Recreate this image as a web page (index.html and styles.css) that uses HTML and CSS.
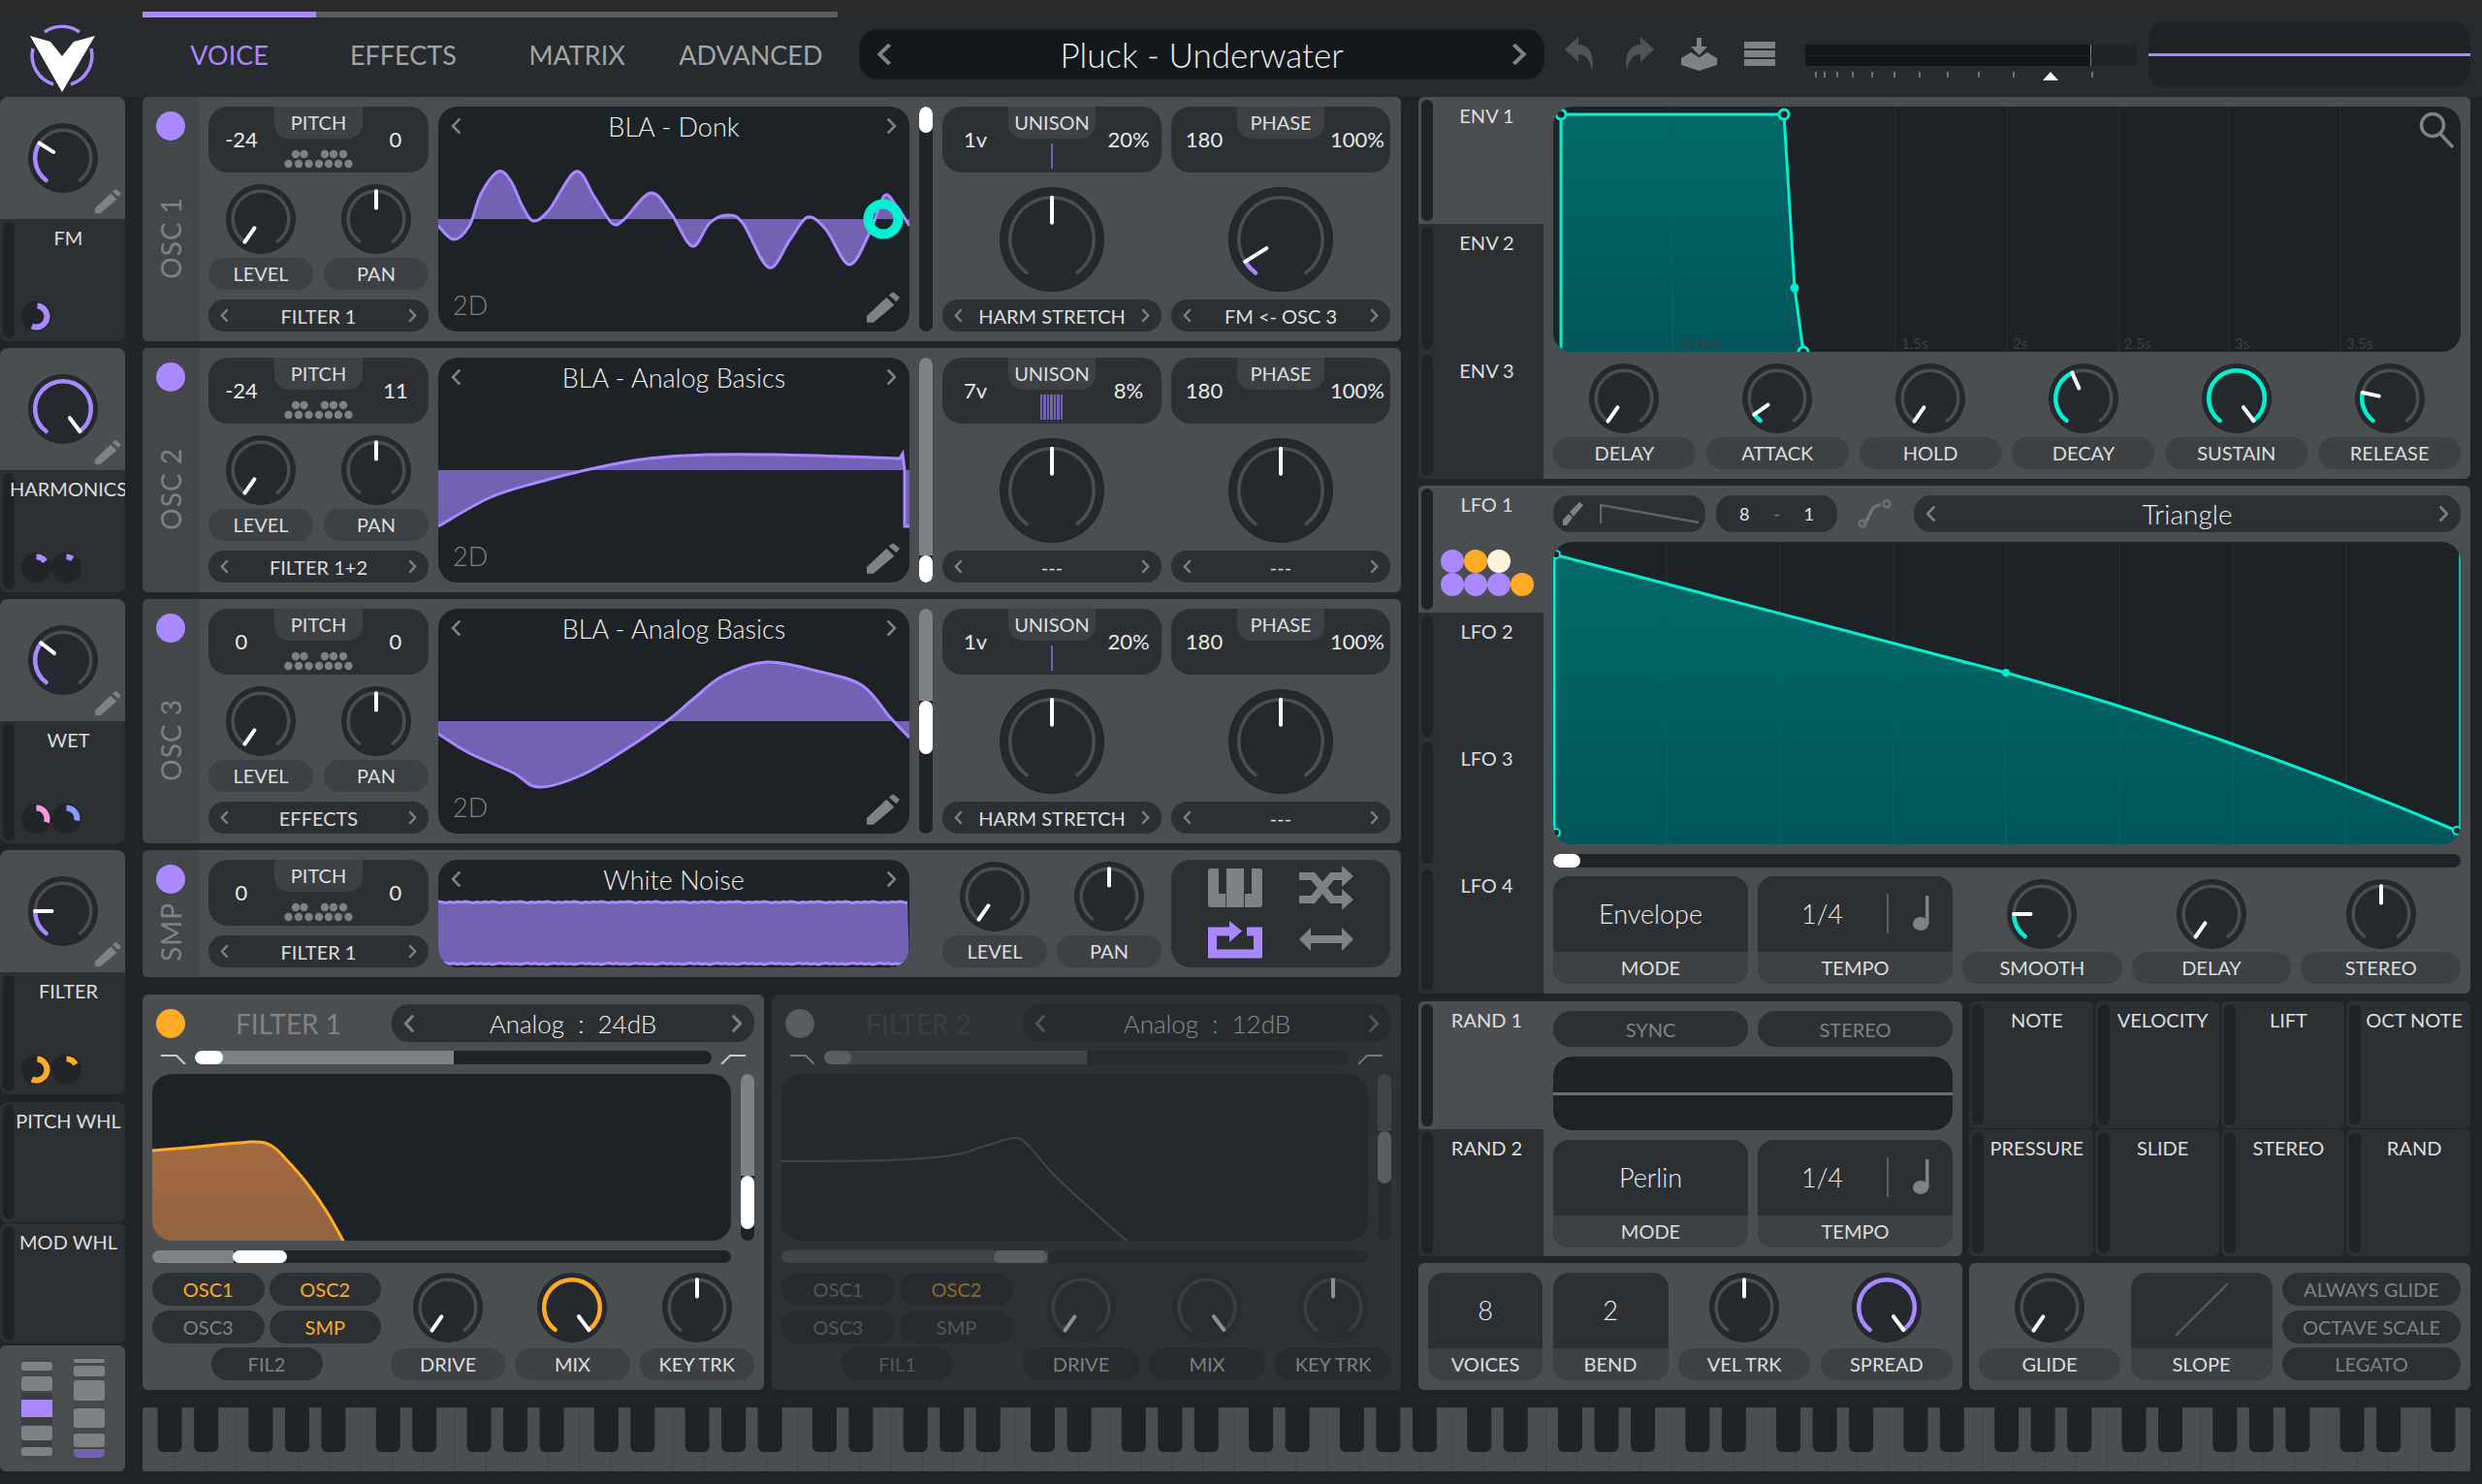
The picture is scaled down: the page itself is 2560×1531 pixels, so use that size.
FILE: index.html
```html
<!DOCTYPE html>
<html lang="en">
<head>
    <meta charset="UTF-8">
    <title>Vital</title>
    <link rel="stylesheet" href="styles.css">
</head>
<body>
    <svg class="defs" width="0" height="0">
        <symbol id="chev-l" viewBox="0 0 10 18" preserveAspectRatio="none"><path d="M8.5 1.5 L2 9 L8.5 16.5" fill="none" stroke="currentColor" stroke-width="2.6"/></symbol>
        <symbol id="chev-r" viewBox="0 0 10 18" preserveAspectRatio="none"><path d="M1.5 1.5 L8 9 L1.5 16.5" fill="none" stroke="currentColor" stroke-width="2.6"/></symbol>
        <symbol id="pencil" viewBox="0 0 30 28"><path d="M0 28 V22 L18 5 L25 12 L6 28 Z M20 3 L24 0 L30 5 L27 9 Z" fill="currentColor"/></symbol>
        <symbol id="dots" viewBox="0 0 72 20"><g fill="currentColor"><circle cx="12" cy="5" r="4.2"/><circle cx="20.5" cy="5" r="4.2"/><circle cx="42" cy="5" r="4.2"/><circle cx="51" cy="5" r="4.2"/><circle cx="61" cy="5" r="4.2"/><circle cx="4.5" cy="15" r="4.2"/><circle cx="15" cy="15" r="4.2"/><circle cx="25.5" cy="15" r="4.2"/><circle cx="36" cy="15" r="4.2"/><circle cx="46" cy="15" r="4.2"/><circle cx="56" cy="15" r="4.2"/><circle cx="66.5" cy="15" r="4.2"/></g></symbol>
        <symbol id="note" viewBox="0 0 18 36"><ellipse cx="8" cy="29" rx="8" ry="7" fill="currentColor"/><rect x="13" y="0" width="3.5" height="30" fill="currentColor"/></symbol>
    </svg>

    <div class="app">
        <div class="topstrip"></div>

        <header class="header">
            <div class="logo">
                <svg width="100" height="88" viewBox="0 0 100 88">
                    <path d="M46 21 A31 31 0 0 1 82 21" fill="none" stroke="#aa88ff" stroke-width="3.5"/>
                    <path d="M34 38 A31 31 0 0 0 55 75" fill="none" stroke="#aa88ff" stroke-width="3.5"/>
                    <path d="M94 38 A31 31 0 0 1 73 75" fill="none" stroke="#aa88ff" stroke-width="3.5"/>
                    <path d="M31 25 L52 31 L64 46 L76 31 L98 25 L64 83 Z" fill="#ffffff"/>
                </svg>
            </div>
            <div class="tabs-wrap">
                <div class="tab-progress"><i></i></div>
                <nav class="main-tabs">
                    <span class="on">VOICE</span>
                    <span>EFFECTS</span>
                    <span>MATRIX</span>
                    <span>ADVANCED</span>
                </nav>
            </div>
            <div class="preset">
                <svg class="chev"><use href="#chev-l"/></svg>
                <span>Pluck - Underwater</span>
                <svg class="chev"><use href="#chev-r"/></svg>
            </div>
            <div class="tools">
                <svg width="30" height="36" viewBox="0 0 30 36"><path d="M0 13 L14 0 V8 C26 8 31 20 28 35 C26 24 22 18 14 18 V26 Z" fill="#4f5356"/></svg>
                <svg width="30" height="36" viewBox="0 0 30 36"><path d="M30 13 L16 0 V8 C4 8 -1 20 2 35 C4 24 8 18 16 18 V26 Z" fill="#4f5356"/></svg>
                <svg width="37" height="34" viewBox="0 0 37 34"><path d="M16 0 H21 V9 H27 L18.5 18 L10 9 H16 Z M0 21 L10 15 L18.5 20.5 L27 15 L37 21 V28 L18.5 34 L0 28 Z" fill="#7f8284"/></svg>
                <svg width="32" height="26" viewBox="0 0 32 26"><path d="M0 0 H32 V7 H0 Z M0 9 H32 V16 H0 Z M0 18 H32 V25 H0 Z" fill="#7f8284"/></svg>
            </div>
            <div class="volume">
                <div class="vol-bars"><i></i><i></i></div>
                <div class="vol-ticks" id="ticks"></div>
            </div>
            <div class="scope"><i></i></div>
        </header>

        <main class="main">
            <aside class="mods">
                <div class="mod">
                    <div class="mod-top"><div class="knob" data-v="-58" data-c="purple"></div><svg class="pencil"><use href="#pencil"/></svg></div>
                    <div class="tab">
                        <div class="tab-name mod-name"><span>FM</span><div class="meters"><div class="meter" data-a="5" data-b="205" data-c="purple"></div></div></div>
                    </div>
                </div>
                <div class="mod">
                    <div class="mod-top"><div class="knob" data-v="143" data-c="purple"></div><svg class="pencil"><use href="#pencil"/></svg></div>
                    <div class="tab">
                        <div class="tab-name mod-name"><span>HARMONICS</span><div class="meters"><div class="meter" data-a="0" data-b="55" data-c="purple"></div><div class="meter" data-a="0" data-b="35" data-c="purple"></div></div></div>
                    </div>
                </div>
                <div class="mod">
                    <div class="mod-top"><div class="knob" data-v="-52" data-c="purple"></div><svg class="pencil"><use href="#pencil"/></svg></div>
                    <div class="tab">
                        <div class="tab-name mod-name"><span>WET</span><div class="meters"><div class="meter" data-a="0" data-b="110" data-c="pink"></div><div class="meter" data-a="0" data-b="100" data-c="blue"></div></div></div>
                    </div>
                </div>
                <div class="mod">
                    <div class="mod-top"><div class="knob" data-v="-90" data-c="purple"></div><svg class="pencil"><use href="#pencil"/></svg></div>
                    <div class="tab">
                        <div class="tab-name mod-name"><span>FILTER</span><div class="meters"><div class="meter" data-a="5" data-b="205" data-c="orange"></div><div class="meter" data-a="0" data-b="60" data-c="orange"></div></div></div>
                    </div>
                </div>
                <div class="wheel-mods">
                    <div class="tab"><div class="tab-name">PITCH WHL</div></div>
                    <div class="tab"><div class="tab-name">MOD WHL</div></div>
                </div>
                <div class="wheels">
                    <svg width="32" height="108" viewBox="0 0 32 108">
                        <rect width="32" height="108" rx="8" fill="#45494c"/>
                        <g fill="#3a3e41"><rect y="38" width="32" height="33"/><rect y="86" width="32" height="9"/></g>
                        <g fill="#7f8284"><rect y="6" width="32" height="9" rx="3"/><rect y="21" width="32" height="15" rx="3"/><rect y="72" width="32" height="15" rx="3"/><rect y="94" width="32" height="9" rx="3"/></g>
                        <rect y="45" width="32" height="18" fill="#aa88ff"/>
                    </svg>
                    <svg width="32" height="108" viewBox="0 0 32 108">
                        <rect width="32" height="108" rx="8" fill="#45494c"/>
                        <g fill="#7f8284"><rect y="3" width="32" height="4" rx="2"/><rect y="10" width="32" height="11" rx="3"/><rect y="25" width="32" height="21" rx="3"/><rect y="54" width="32" height="20" rx="3"/><rect y="80" width="32" height="14" rx="3"/></g>
                        <path d="M0 96 H32 V99 Q32 105 26 105 H6 Q0 105 0 99 Z" fill="#7361b3"/>
                    </svg>
                </div>
            </aside>

            <div class="center">
                <section class="panel osc">
                    <div class="strip"><span class="led"></span><span class="vlabel">OSC 1</span></div>
                    <div class="osc-left">
                        <div class="readout">
                            <span class="val">-24</span>
                            <div class="readout-mid"><span class="tab-label">PITCH</span><svg class="dots"><use href="#dots"/></svg></div>
                            <span class="val">0</span>
                        </div>
                        <div class="pair">
                            <div class="kn"><div class="knob" data-v="-145"></div><div class="lbl">LEVEL</div></div>
                            <div class="kn"><div class="knob" data-v="0"></div><div class="lbl">PAN</div></div>
                        </div>
                        <div class="sel"><svg class="chev"><use href="#chev-l"/></svg><span>FILTER 1</span><svg class="chev"><use href="#chev-r"/></svg></div>
                    </div>
                    <div class="wave">
                        <svg class="wave-svg" data-wave="donk" width="486" height="232" viewBox="0 0 486 232"></svg>
                        <div class="wave-title"><svg class="chev"><use href="#chev-l"/></svg><span>BLA - Donk</span><svg class="chev"><use href="#chev-r"/></svg></div>
                        <div class="wave-foot"><span>2D</span><svg class="pencil-lg"><use href="#pencil"/></svg></div>
                    </div>
                    <div class="vscroll"><i class="fill" style="height:0"></i><i class="thumb" style="top:0;height:27px"></i></div>
                    <div class="osc-col">
                        <div class="readout">
                            <span class="val">1v</span>
                            <div class="readout-mid"><span class="tab-label">UNISON</span><i class="voices one"></i></div>
                            <span class="val">20%</span>
                        </div>
                        <div class="knob big" data-v="0"></div>
                        <div class="sel"><svg class="chev"><use href="#chev-l"/></svg><span>HARM STRETCH</span><svg class="chev"><use href="#chev-r"/></svg></div>
                    </div>
                    <div class="osc-col">
                        <div class="readout">
                            <span class="val">180</span>
                            <div class="readout-mid"><span class="tab-label">PHASE</span></div>
                            <span class="val">100%</span>
                        </div>
                        <div class="knob big" data-v="-122" data-c="purple"></div>
                        <div class="sel"><svg class="chev"><use href="#chev-l"/></svg><span>FM &lt;- OSC 3</span><svg class="chev"><use href="#chev-r"/></svg></div>
                    </div>
                </section>

                <section class="panel osc">
                    <div class="strip"><span class="led"></span><span class="vlabel">OSC 2</span></div>
                    <div class="osc-left">
                        <div class="readout">
                            <span class="val">-24</span>
                            <div class="readout-mid"><span class="tab-label">PITCH</span><svg class="dots"><use href="#dots"/></svg></div>
                            <span class="val">11</span>
                        </div>
                        <div class="pair">
                            <div class="kn"><div class="knob" data-v="-145"></div><div class="lbl">LEVEL</div></div>
                            <div class="kn"><div class="knob" data-v="0"></div><div class="lbl">PAN</div></div>
                        </div>
                        <div class="sel"><svg class="chev"><use href="#chev-l"/></svg><span>FILTER 1+2</span><svg class="chev"><use href="#chev-r"/></svg></div>
                    </div>
                    <div class="wave">
                        <svg class="wave-svg" data-wave="basic" width="486" height="232" viewBox="0 0 486 232"></svg>
                        <div class="wave-title"><svg class="chev"><use href="#chev-l"/></svg><span>BLA - Analog Basics</span><svg class="chev"><use href="#chev-r"/></svg></div>
                        <div class="wave-foot"><span>2D</span><svg class="pencil-lg"><use href="#pencil"/></svg></div>
                    </div>
                    <div class="vscroll"><i class="fill" style="height:204px"></i><i class="thumb" style="top:204px;height:28px"></i></div>
                    <div class="osc-col">
                        <div class="readout">
                            <span class="val">7v</span>
                            <div class="readout-mid"><span class="tab-label">UNISON</span><i class="voices many"></i></div>
                            <span class="val">8%</span>
                        </div>
                        <div class="knob big" data-v="0"></div>
                        <div class="sel"><svg class="chev"><use href="#chev-l"/></svg><span>---</span><svg class="chev"><use href="#chev-r"/></svg></div>
                    </div>
                    <div class="osc-col">
                        <div class="readout">
                            <span class="val">180</span>
                            <div class="readout-mid"><span class="tab-label">PHASE</span></div>
                            <span class="val">100%</span>
                        </div>
                        <div class="knob big" data-v="0"></div>
                        <div class="sel"><svg class="chev"><use href="#chev-l"/></svg><span>---</span><svg class="chev"><use href="#chev-r"/></svg></div>
                    </div>
                </section>

                <section class="panel osc">
                    <div class="strip"><span class="led"></span><span class="vlabel">OSC 3</span></div>
                    <div class="osc-left">
                        <div class="readout">
                            <span class="val">0</span>
                            <div class="readout-mid"><span class="tab-label">PITCH</span><svg class="dots"><use href="#dots"/></svg></div>
                            <span class="val">0</span>
                        </div>
                        <div class="pair">
                            <div class="kn"><div class="knob" data-v="-145"></div><div class="lbl">LEVEL</div></div>
                            <div class="kn"><div class="knob" data-v="0"></div><div class="lbl">PAN</div></div>
                        </div>
                        <div class="sel"><svg class="chev"><use href="#chev-l"/></svg><span>EFFECTS</span><svg class="chev"><use href="#chev-r"/></svg></div>
                    </div>
                    <div class="wave">
                        <svg class="wave-svg" data-wave="basic3" width="486" height="232" viewBox="0 0 486 232"></svg>
                        <div class="wave-title"><svg class="chev"><use href="#chev-l"/></svg><span>BLA - Analog Basics</span><svg class="chev"><use href="#chev-r"/></svg></div>
                        <div class="wave-foot"><span>2D</span><svg class="pencil-lg"><use href="#pencil"/></svg></div>
                    </div>
                    <div class="vscroll"><i class="fill" style="height:95px"></i><i class="thumb" style="top:95px;height:55px"></i></div>
                    <div class="osc-col">
                        <div class="readout">
                            <span class="val">1v</span>
                            <div class="readout-mid"><span class="tab-label">UNISON</span><i class="voices one"></i></div>
                            <span class="val">20%</span>
                        </div>
                        <div class="knob big" data-v="0"></div>
                        <div class="sel"><svg class="chev"><use href="#chev-l"/></svg><span>HARM STRETCH</span><svg class="chev"><use href="#chev-r"/></svg></div>
                    </div>
                    <div class="osc-col">
                        <div class="readout">
                            <span class="val">180</span>
                            <div class="readout-mid"><span class="tab-label">PHASE</span></div>
                            <span class="val">100%</span>
                        </div>
                        <div class="knob big" data-v="0"></div>
                        <div class="sel"><svg class="chev"><use href="#chev-l"/></svg><span>---</span><svg class="chev"><use href="#chev-r"/></svg></div>
                    </div>
                </section>

                <section class="panel osc smp">
                    <div class="strip"><span class="led"></span><span class="vlabel">SMP</span></div>
                    <div class="osc-left">
                        <div class="readout">
                            <span class="val">0</span>
                            <div class="readout-mid"><span class="tab-label">PITCH</span><svg class="dots"><use href="#dots"/></svg></div>
                            <span class="val">0</span>
                        </div>
                        <div class="sel"><svg class="chev"><use href="#chev-l"/></svg><span>FILTER 1</span><svg class="chev"><use href="#chev-r"/></svg></div>
                    </div>
                    <div class="wave wave-smp">
                        <svg class="wave-svg" data-wave="noise" width="486" height="111" viewBox="0 0 486 111"></svg>
                        <div class="wave-title"><svg class="chev"><use href="#chev-l"/></svg><span>White Noise</span><svg class="chev"><use href="#chev-r"/></svg></div>
                    </div>
                    <div class="smp-knobs">
                        <div class="kn"><div class="knob" data-v="-145"></div><div class="lbl">LEVEL</div></div>
                        <div class="kn"><div class="knob" data-v="0"></div><div class="lbl">PAN</div></div>
                    </div>
                    <div class="smp-icons">
                        <svg width="56" height="40" viewBox="0 0 56 40">
                            <rect width="56" height="40" rx="3" fill="#7f8284"/>
                            <path d="M11 0 H19 V26 H18.8 V40 H18 V26 H11 Z M37 0 H45 V26 H38 V40 H37 Z" fill="#2c3033"/>
                        </svg>
                        <svg width="56" height="46" viewBox="0 0 56 46">
                            <path d="M0 11 H14 L34 35 H46 M0 35 H14 L34 11 H46" fill="none" stroke="#7f8284" stroke-width="8"/>
                            <path d="M44 0 L56 11 L44 22 Z M44 24 L56 35 L44 46 Z" fill="#7f8284"/>
                        </svg>
                        <svg width="56" height="39" viewBox="0 0 56 39">
                            <path d="M24 11 H4.5 V34 H51.5 V11 H40" fill="none" stroke="#aa88ff" stroke-width="9"/>
                            <path d="M22 0 L35 10.5 L22 22 Z" fill="#aa88ff"/>
                        </svg>
                        <svg width="56" height="24" viewBox="0 0 56 24">
                            <path d="M8 12 H48" stroke="#7f8284" stroke-width="8"/>
                            <path d="M12 0 L0 12 L12 24 Z M44 0 L56 12 L44 24 Z" fill="#7f8284"/>
                        </svg>
                    </div>
                </section>

                <div class="filters">
                    <section class="panel filter">
                        <div class="fil-head"><span class="led orange"></span><span class="fil-name">FILTER 1</span>
                            <div class="preset-sel"><svg class="chev"><use href="#chev-l"/></svg><span>Analog&nbsp; : &nbsp;24dB</span><svg class="chev"><use href="#chev-r"/></svg></div>
                        </div>
                        <div class="fil-morph">
                            <svg width="26" height="14" viewBox="0 0 26 14"><path d="M0 5 H16 L25 14" fill="none" stroke="#c9cacb" stroke-width="2"/></svg>
                            <div class="slider"><i class="fill" style="width:50%"></i><i class="thumb" style="left:0;width:29px"></i></div>
                            <svg width="26" height="14" viewBox="0 0 26 14"><path d="M1 14 L10 5 H26" fill="none" stroke="#c9cacb" stroke-width="2"/></svg>
                        </div>
                        <div class="fil-graph">
                            <div class="graph"><svg class="wave-svg" data-curve="f1" width="597" height="172" viewBox="0 0 597 172"></svg></div>
                            <div class="vscroll"><i class="fill" style="height:105px"></i><i class="thumb" style="top:105px;height:55px"></i></div>
                        </div>
                        <div class="slider fil-cut"><i class="fill" style="width:84px"></i><i class="thumb" style="left:83px;width:56px"></i></div>
                        <div class="fil-bottom">
                            <div class="routes">
                                <div class="btn on">OSC1</div><div class="btn on">OSC2</div>
                                <div class="btn">OSC3</div><div class="btn on">SMP</div>
                                <div class="btn fil-link">FIL2</div>
                            </div>
                            <div class="fil-knobs">
                                <div class="kn"><div class="knob" data-v="-145"></div><div class="lbl">DRIVE</div></div>
                                <div class="kn"><div class="knob" data-v="143" data-c="orange"></div><div class="lbl">MIX</div></div>
                                <div class="kn"><div class="knob" data-v="0"></div><div class="lbl">KEY TRK</div></div>
                            </div>
                        </div>
                    </section>

                    <section class="panel filter off">
                        <div class="fil-head"><span class="led"></span><span class="fil-name">FILTER 2</span>
                            <div class="preset-sel"><svg class="chev"><use href="#chev-l"/></svg><span>Analog&nbsp; : &nbsp;12dB</span><svg class="chev"><use href="#chev-r"/></svg></div>
                        </div>
                        <div class="fil-morph">
                            <svg width="26" height="14" viewBox="0 0 26 14"><path d="M0 5 H16 L25 14" fill="none" stroke="#c9cacb" stroke-width="2"/></svg>
                            <div class="slider"><i class="fill" style="width:50%"></i><i class="thumb" style="left:0;width:28px"></i></div>
                            <svg width="26" height="14" viewBox="0 0 26 14"><path d="M1 14 L10 5 H26" fill="none" stroke="#c9cacb" stroke-width="2"/></svg>
                        </div>
                        <div class="fil-graph">
                            <div class="graph"><svg class="wave-svg" data-curve="f2" width="606" height="172" viewBox="0 0 606 172"></svg></div>
                            <div class="vscroll"><i class="fill" style="height:59px"></i><i class="thumb" style="top:59px;height:54px"></i></div>
                        </div>
                        <div class="slider fil-cut"><i class="fill" style="width:275px"></i><i class="thumb" style="left:219px;width:55px"></i></div>
                        <div class="fil-bottom">
                            <div class="routes">
                                <div class="btn">OSC1</div><div class="btn on">OSC2</div>
                                <div class="btn">OSC3</div><div class="btn">SMP</div>
                                <div class="btn fil-link">FIL1</div>
                            </div>
                            <div class="fil-knobs">
                                <div class="kn"><div class="knob" data-v="-145"></div><div class="lbl">DRIVE</div></div>
                                <div class="kn"><div class="knob" data-v="143"></div><div class="lbl">MIX</div></div>
                                <div class="kn"><div class="knob" data-v="0"></div><div class="lbl">KEY TRK</div></div>
                            </div>
                        </div>
                    </section>
                </div>
            </div>

            <div class="right">
                <section class="panel sec env">
                    <div class="sec-tabs">
                        <div class="tab on"><div class="tab-name">ENV 1</div></div>
                        <div class="tab"><div class="tab-name">ENV 2</div></div>
                        <div class="tab"><div class="tab-name">ENV 3</div></div>
                    </div>
                    <div class="sec-body">
                        <div class="graph env-graph">
                            <svg width="936" height="253" viewBox="0 0 936 253">
                                <defs>
                                    <linearGradient id="teal-fill" x1="0" y1="0" x2="0" y2="1"><stop offset="0" stop-color="#006a68"/><stop offset="1" stop-color="#00565a"/></linearGradient>
                                </defs>
                                <g stroke="#282c2f" stroke-width="1.5"><path d="M123 0 V253 M238 0 V253 M353 0 V253 M468 0 V253 M583 0 V253 M697 0 V253 M812 0 V253"/></g>
                                <path d="M8 8 H238 L249 187 L258 253 H8 Z" fill="url(#teal-fill)"/>
                                <path d="M123 8 V253" stroke="#046462" stroke-width="1.5"/>
                                <g class="grid-text">
                                    <text x="129" y="250">500ms</text><text x="244" y="250">1</text><text x="359" y="250">1.5s</text><text x="474" y="250">2s</text><text x="589" y="250">2.5s</text><text x="703" y="250">3s</text><text x="818" y="250">3.5s</text>
                                </g>
                                <path d="M8 253 V8 H238 L249 187 L258 253" fill="none" stroke="#00f0d2" stroke-width="3"/>
                                <g fill="#1d2226" stroke="#00f0d2" stroke-width="3"><circle cx="8" cy="8" r="5"/><circle cx="238" cy="8" r="5"/><circle cx="258" cy="253" r="5"/></g>
                                <circle cx="249" cy="187" r="4.5" fill="#00f0d2"/>
                                <circle cx="907" cy="19" r="11.5" fill="none" stroke="#7f8284" stroke-width="3.5"/>
                                <path d="M915 28 L928 42" stroke="#7f8284" stroke-width="3.5"/>
                            </svg>
                        </div>
                        <div class="env-knobs">
                            <div class="kn"><div class="knob" data-v="-145"></div><div class="lbl">DELAY</div></div>
                            <div class="kn"><div class="knob" data-v="-125" data-c="teal"></div><div class="lbl">ATTACK</div></div>
                            <div class="kn"><div class="knob" data-v="-145"></div><div class="lbl">HOLD</div></div>
                            <div class="kn"><div class="knob" data-v="-24" data-c="teal"></div><div class="lbl">DECAY</div></div>
                            <div class="kn"><div class="knob" data-v="143" data-c="teal"></div><div class="lbl">SUSTAIN</div></div>
                            <div class="kn"><div class="knob" data-v="-78" data-c="teal"></div><div class="lbl">RELEASE</div></div>
                        </div>
                    </div>
                </section>

                <section class="panel sec lfo">
                    <div class="sec-tabs">
                        <div class="tab on"><div class="tab-name">LFO 1
                            <div class="lfo-dots"><i class="p"></i><i class="o"></i><i class="c"></i><i class="gap"></i><i class="p"></i><i class="p"></i><i class="p"></i><i class="o"></i></div>
                        </div></div>
                        <div class="tab"><div class="tab-name">LFO 2</div></div>
                        <div class="tab"><div class="tab-name">LFO 3</div></div>
                        <div class="tab"><div class="tab-name">LFO 4</div></div>
                    </div>
                    <div class="sec-body">
                        <div class="lfo-top">
                            <div class="lfo-shape">
                                <svg width="22" height="24" viewBox="0 0 22 24"><path d="M1 24 V18 L7 12 L11 16 L5 24 Z M8 10 L18 0 L22 3 L12 15 Z" fill="#7f8284"/></svg>
                                <svg width="102" height="20" viewBox="0 0 102 20"><path d="M1 20 V1 L102 19" fill="none" stroke="#5f6365" stroke-width="2.5"/></svg>
                            </div>
                            <div class="lfo-grid"><span>8</span><em>-</em><span>1</span></div>
                            <svg class="lfo-smooth" width="38" height="30" viewBox="0 0 38 30"><path d="M5 24 C14 24 10 6 24 6" fill="none" stroke="#6f7274" stroke-width="3.5"/><circle cx="5" cy="25" r="3.5" fill="none" stroke="#6f7274" stroke-width="2.5"/><circle cx="30" cy="5" r="3.5" fill="none" stroke="#6f7274" stroke-width="2.5"/></svg>
                            <div class="sel lfo-sel"><svg class="chev"><use href="#chev-l"/></svg><span>Triangle</span><svg class="chev"><use href="#chev-r"/></svg></div>
                        </div>
                        <div class="graph lfo-graph">
                            <svg width="936" height="312" viewBox="0 0 936 312">
                                <g stroke="#282c2f" stroke-width="1.5"><path d="M117 0 V312 M234 0 V312 M351 0 V312 M467 0 V312 M584 0 V312 M701 0 V312 M818 0 V312"/></g>
                                <path d="M2 13 L467 135 Q695 198 932 298 V312 H2 Z" fill="url(#teal-fill)"/>
                                <g stroke="#04625f" stroke-width="1.5"><path d="M117 40 V312 M234 72 V312 M351 104 V312 M467 135 V312 M584 170 V312 M701 205 V312 M818 250 V312"/></g>
                                <path d="M1 300 V13 L467 135 Q695 198 932 298" fill="none" stroke="#00f0d2" stroke-width="3"/>
                                <path d="M935 10 V300" stroke="#00f0d2" stroke-width="1.5"/>
                                <g fill="#1d2226" stroke="#00f0d2" stroke-width="2"><circle cx="3" cy="13" r="4"/><circle cx="3" cy="300" r="4"/><circle cx="932" cy="298" r="4"/></g>
                                <circle cx="467" cy="135" r="4" fill="#00f0d2"/>
                            </svg>
                        </div>
                        <div class="slider lfo-pos"><i class="thumb" style="left:0;width:28px"></i></div>
                        <div class="lfo-bottom">
                            <div class="valbox"><div class="valbox-top">Envelope</div><div class="valbox-lbl">MODE</div></div>
                            <div class="valbox"><div class="valbox-top tempo"><span>1/4</span><i></i><svg width="18" height="36"><use href="#note"/></svg></div><div class="valbox-lbl">TEMPO</div></div>
                            <div class="kn"><div class="knob" data-v="-90" data-c="teal"></div><div class="lbl">SMOOTH</div></div>
                            <div class="kn"><div class="knob" data-v="-145"></div><div class="lbl">DELAY</div></div>
                            <div class="kn"><div class="knob" data-v="0"></div><div class="lbl">STEREO</div></div>
                        </div>
                    </div>
                </section>

                <div class="right-row rand-row">
                    <section class="panel sec rand">
                        <div class="sec-tabs">
                            <div class="tab on"><div class="tab-name">RAND 1</div></div>
                            <div class="tab"><div class="tab-name">RAND 2</div></div>
                        </div>
                        <div class="sec-body rand-body">
                            <div class="btn tall">SYNC</div>
                            <div class="btn tall">STEREO</div>
                            <div class="graph rand-graph"><i></i></div>
                            <div class="valbox"><div class="valbox-top">Perlin</div><div class="valbox-lbl">MODE</div></div>
                            <div class="valbox"><div class="valbox-top tempo"><span>1/4</span><i></i><svg width="18" height="36"><use href="#note"/></svg></div><div class="valbox-lbl">TEMPO</div></div>
                        </div>
                    </section>
                    <div class="macros">
                        <div class="tab"><div class="tab-name">NOTE</div></div>
                        <div class="tab"><div class="tab-name">VELOCITY</div></div>
                        <div class="tab"><div class="tab-name">LIFT</div></div>
                        <div class="tab"><div class="tab-name">OCT NOTE</div></div>
                        <div class="tab"><div class="tab-name">PRESSURE</div></div>
                        <div class="tab"><div class="tab-name">SLIDE</div></div>
                        <div class="tab"><div class="tab-name">STEREO</div></div>
                        <div class="tab"><div class="tab-name">RAND</div></div>
                    </div>
                </div>

                <div class="right-row bottom-row">
                    <section class="panel voices-panel">
                        <div class="valbox"><div class="valbox-top">8</div><div class="valbox-lbl">VOICES</div></div>
                        <div class="valbox"><div class="valbox-top">2</div><div class="valbox-lbl">BEND</div></div>
                        <div class="kn"><div class="knob" data-v="0"></div><div class="lbl">VEL TRK</div></div>
                        <div class="kn"><div class="knob" data-v="143" data-c="purple"></div><div class="lbl">SPREAD</div></div>
                    </section>
                    <section class="panel glide-panel">
                        <div class="kn"><div class="knob" data-v="-145"></div><div class="lbl">GLIDE</div></div>
                        <div class="valbox"><div class="valbox-top"><svg width="56" height="56" viewBox="0 0 56 56"><path d="M1 55 L55 1" stroke="#5a5e60" stroke-width="2"/></svg></div><div class="valbox-lbl">SLOPE</div></div>
                        <div class="glide-btns">
                            <div class="btn">ALWAYS GLIDE</div>
                            <div class="btn">OCTAVE SCALE</div>
                            <div class="btn">LEGATO</div>
                        </div>
                    </section>
                </div>
            </div>

            <div class="keyboard" id="keyboard"></div>
        </main>
    </div>
    <script src="script.js"></script>
</body>
</html>
```

FILE: styles.css
```css
* {
    box-sizing: border-box;
}

body {
    margin: 0;
    background: #202427;
    font-family: Lato, "Open Sans", sans-serif;
    color: #e4e5e5;
    overflow: hidden;
}

.defs {
    position: absolute;
}

.app {
    width: 2560px;
    height: 1531px;
    display: flex;
    flex-direction: column;
}

.topstrip {
    height: 12px;
    background: #2a2a2a;
}

.header {
    height: 88px;
    display: flex;
    align-items: center;
    background: #272b2e;
    padding-right: 12px;
}

.logo {
    width: 147px;
    height: 88px;
    flex: none;
}

.logo svg {
    display: block;
}

.tabs-wrap {
    width: 717px;
    height: 88px;
    flex: none;
}

.tab-progress {
    height: 6px;
    background: #5a5e60;
}

.tab-progress i {
    display: block;
    width: 25%;
    height: 6px;
    background: #aa88ff;
}

.main-tabs {
    display: grid;
    grid-template-columns: repeat(4, 1fr);
    height: 76px;
    align-items: center;
    text-align: center;
    font-size: 27px;
    color: #a2a5a6;
}

.main-tabs .on {
    color: #aa88ff;
}

.preset {
    margin-left: 22px;
    width: 707px;
    height: 52px;
    flex: none;
    display: flex;
    align-items: center;
    justify-content: space-between;
    padding: 0 18px;
    background: #14181a;
    border-radius: 20px;
    font-size: 35px;
    font-weight: 300;
    color: #eeeeee;
}

.preset .chev {
    width: 16px;
    height: 24px;
}

.tools {
    margin-left: 5px;
    width: 248px;
    flex: none;
    display: grid;
    grid-template-columns: 62px 62px 61px 63px;
    justify-items: center;
    align-items: center;
}

.volume {
    margin: 20px 0 0 16px;
    width: 342px;
    height: 40px;
    flex: none;
    position: relative;
}

.vol-bars {
    height: 22px;
    display: flex;
    flex-direction: column;
    gap: 1px;
    background: #1f2326;
}

.vol-bars i {
    display: block;
    flex: 1;
    width: 295px;
    background: #13171a;
    border-right: 1.5px solid #7f8284;
}

.vol-ticks {
    position: relative;
    height: 16px;
}

.vol-ticks i {
    position: absolute;
    top: 6px;
    width: 1.5px;
    height: 6px;
    background: #6f7274;
}

.vol-ticks b {
    position: absolute;
    top: 6px;
    width: 0;
    height: 0;
    border-left: 8px solid transparent;
    border-right: 8px solid transparent;
    border-bottom: 9px solid #ffffff;
}

.scope {
    margin-left: 12px;
    width: 332px;
    height: 68px;
    flex: none;
    display: flex;
    align-items: center;
    background: #1f2326;
    border-radius: 18px;
}

.scope i {
    display: block;
    width: 100%;
    height: 3px;
    background: #aa88ff;
}

.main {
    display: grid;
    grid-template-columns: 129px 1298px 1085px;
    grid-template-rows: 1334px 66px;
    column-gap: 18px;
    row-gap: 18px;
}

/* left column */
.mods {
    grid-row: 1 / 3;
    display: flex;
    flex-direction: column;
    gap: 7px;
}

.mod {
    height: 252px;
    display: flex;
    flex-direction: column;
    border-radius: 8px;
    overflow: hidden;
    flex: none;
}

.mod-top {
    height: 126px;
    position: relative;
    display: flex;
    justify-content: center;
    align-items: flex-start;
    padding-top: 27px;
    background: #4a4e51;
}

.pencil {
    position: absolute;
    left: 97px;
    top: 95px;
    width: 29px;
    height: 25px;
    color: #7f8284;
}

.tab {
    display: flex;
    padding: 3px;
    background: #2c3033;
    min-height: 0;
    flex: 1;
    overflow: hidden;
}

.tab::before {
    content: "";
    width: 12px;
    flex: none;
    border-radius: 6px;
    background: #1f2326;
}

.tab.on {
    background: #4a4e51;
}

.tab-name {
    flex: 1;
    min-width: 0;
    line-height: 32px;
    font-size: 20px;
    text-align: center;
    white-space: nowrap;
    color: #dddede;
}

.mod-name {
    display: flex;
    flex-direction: column;
    align-items: center;
}

.meters {
    display: flex;
    align-self: flex-start;
    margin: auto 0 7px 7px;
}

.meter {
    width: 31px;
    height: 31px;
}

.meter svg,
.knob svg {
    display: block;
}

.wheel-mods {
    height: 249px;
    margin-top: 1px;
    flex: none;
    display: flex;
    flex-direction: column;
    gap: 1px;
}

.wheel-mods .tab {
    border-radius: 8px;
}

.wheels {
    height: 130px;
    flex: none;
    margin-top: -5px;
    display: flex;
    justify-content: center;
    gap: 22px;
    padding-top: 11px;
    background: #4a4e51;
    border-radius: 6px;
}

/* center column */
.center {
    display: flex;
    flex-direction: column;
    gap: 7px;
}

.panel {
    background: #4a4e51;
    border-radius: 6px;
}

.osc {
    height: 252px;
    flex: none;
    display: grid;
    grid-template-columns: 58px 227px 486px 14px 226px 226px;
    column-gap: 10px;
    padding-right: 10px;
    overflow: hidden;
}

.osc > * {
    margin: 10px 0;
}

.osc > .strip {
    margin: 0;
}

.strip {
    display: flex;
    flex-direction: column;
    align-items: center;
    padding-top: 15px;
    background: #43474a;
}

.led {
    width: 30px;
    height: 30px;
    flex: none;
    border-radius: 50%;
    background: #aa88ff;
}

.led.orange {
    background: #ffab26;
}

.vlabel {
    margin-top: 58px;
    writing-mode: vertical-rl;
    transform: rotate(180deg);
    font-size: 28px;
    letter-spacing: 1px;
    line-height: 30px;
    color: #7f8284;
}

.osc-left {
    display: flex;
    flex-direction: column;
}

.readout {
    height: 68px;
    flex: none;
    display: grid;
    grid-template-columns: 68px 1fr 68px;
    background: #2c3033;
    border-radius: 20px;
    overflow: hidden;
}

.val {
    font-size: 22px;
    line-height: 68px;
    text-align: center;
    color: #e8e8e8;
}

.readout-mid {
    display: flex;
    flex-direction: column;
    align-items: center;
}

.tab-label {
    width: 100%;
    height: 33px;
    line-height: 33px;
    text-align: center;
    font-size: 20px;
    color: #dddede;
    background: #3d4144;
    border-radius: 0 0 15px 15px;
}

.dots {
    margin-top: 11px;
    width: 72px;
    height: 20px;
    color: #7f8284;
}

.voices {
    display: block;
    margin-top: 5px;
    height: 26px;
}

.voices.one {
    width: 2px;
    background: #7361b3;
}

.voices.many {
    width: 24px;
    background: repeating-linear-gradient(90deg, #7361b3 0 2px, #2c3033 2px 3px, #7361b3 3px 6px, #2c3033 6px 7px);
}

.pair {
    margin-top: 12px;
    display: grid;
    grid-template-columns: 1fr 1fr;
    gap: 11px;
}

.kn {
    display: flex;
    flex-direction: column;
    align-items: center;
}

.knob {
    width: 72px;
    height: 72px;
    flex: none;
}

.knob.big {
    width: 108px;
    height: 108px;
    margin: 15px auto 8px;
}

.lbl {
    margin-top: 4px;
    width: 100%;
    height: 33px;
    line-height: 33px;
    text-align: center;
    font-size: 20px;
    white-space: nowrap;
    color: #dddede;
    background: #3d4144;
    border-radius: 16px;
}

.sel {
    margin-top: 10px;
    height: 33px;
    flex: none;
    display: flex;
    align-items: center;
    justify-content: space-between;
    padding: 0 12px;
    background: #2c3033;
    border-radius: 16px;
    font-size: 20px;
    color: #dddede;
}

.chev {
    width: 9px;
    height: 15px;
    flex: none;
    color: #7f8284;
}

.wave {
    position: relative;
    display: flex;
    flex-direction: column;
    justify-content: space-between;
    background: #1d2226;
    border-radius: 20px;
    overflow: hidden;
}

.wave-svg {
    position: absolute;
    left: 0;
    top: 0;
}

.wave-title {
    position: relative;
    display: flex;
    align-items: center;
    justify-content: space-between;
    height: 40px;
    padding: 0 13px;
    font-size: 27px;
    font-weight: 300;
    color: #eeeeee;
}

.wave-title .chev {
    width: 11px;
    height: 18px;
}

.wave-foot {
    position: relative;
    display: flex;
    align-items: flex-end;
    justify-content: space-between;
    padding: 0 10px 11px 15px;
    font-size: 27px;
    font-weight: 300;
    line-height: 32px;
    color: #7f8284;
}

.pencil-lg {
    width: 34px;
    height: 32px;
    margin-bottom: -2px;
}

.vscroll {
    position: relative;
    background: #1f2326;
    border-radius: 7px;
    overflow: hidden;
}

.vscroll .fill {
    position: absolute;
    left: 0;
    top: 0;
    width: 100%;
    background: #7f8284;
}

.vscroll .thumb {
    position: absolute;
    left: 0;
    width: 100%;
    background: #ffffff;
    border-radius: 7px;
}

.osc-col {
    display: flex;
    flex-direction: column;
}

.osc-col .sel {
    margin-top: 0;
}

/* sample row */
.smp {
    height: 131px;
}

.smp .vlabel {
    margin-top: 9px;
}

.wave-smp {
    justify-content: flex-start;
}

.smp-knobs {
    grid-column: 5;
    display: grid;
    grid-template-columns: 1fr 1fr;
    gap: 10px;
    padding-top: 2px;
}

.smp-icons {
    grid-column: 6;
    display: grid;
    grid-template-columns: 94px 94px;
    grid-template-rows: 53px 53px;
    justify-content: center;
    align-content: center;
    justify-items: center;
    align-items: center;
    background: #2c3033;
    border-radius: 20px;
}

/* filters */
.filters {
    margin-top: 11px;
    display: grid;
    grid-template-columns: 641px 649px;
    gap: 8px;
}

.filter {
    height: 408px;
    padding: 10px;
    display: flex;
    flex-direction: column;
    --sel: 374px;
    --grid: 236px;
}

.fil-head {
    height: 39px;
    flex: none;
    display: flex;
    align-items: center;
}

.fil-head .led {
    margin-left: 4px;
}

.fil-name {
    flex: 1;
    text-align: center;
    font-size: 28px;
    color: #7f8284;
}

.preset-sel {
    width: var(--sel);
    height: 39px;
    display: flex;
    align-items: center;
    justify-content: space-between;
    padding: 0 12px;
    background: #2c3033;
    border-radius: 18px;
    font-size: 26px;
    font-weight: 300;
    color: #eeeeee;
}

.preset-sel .chev {
    width: 12px;
    height: 20px;
}

.fil-morph {
    margin-top: 9px;
    height: 14px;
    flex: none;
    display: grid;
    grid-template-columns: 44px 1fr 44px;
    align-items: center;
    justify-items: center;
}

.slider {
    position: relative;
    width: 100%;
    height: 14px;
    flex: none;
    background: #1f2326;
    border-radius: 7px;
    overflow: hidden;
}

.slider .fill {
    position: absolute;
    left: 0;
    top: 0;
    height: 100%;
    background: #7f8284;
}

.slider .thumb {
    position: absolute;
    top: 0;
    height: 100%;
    background: #ffffff;
    border-radius: 7px;
}

.fil-graph {
    margin-top: 10px;
    height: 172px;
    flex: none;
    display: flex;
    gap: 10px;
}

.fil-graph .vscroll {
    width: 14px;
    flex: none;
}

.graph {
    position: relative;
    flex: 1;
    background: #1d2226;
    border-radius: 20px;
    overflow: hidden;
}

.graph svg {
    display: block;
}

.fil-cut {
    margin-top: 10px;
    width: calc(100% - 24px);
    height: 13px;
}

.fil-bottom {
    margin-top: 10px;
    height: 111px;
    flex: none;
    display: grid;
    grid-template-columns: var(--grid) 1fr;
    gap: 10px;
}

.routes {
    display: grid;
    grid-template-columns: 1fr 1fr;
    grid-template-rows: 34px 34px 34px;
    column-gap: 5px;
    row-gap: 4.5px;
}

.btn {
    display: flex;
    align-items: center;
    justify-content: center;
    background: #2c3033;
    border-radius: 17px;
    font-size: 20px;
    white-space: nowrap;
    color: #7f8284;
}

.btn.on {
    color: #ffab26;
}

.fil-link {
    grid-column: 1 / 3;
    width: 115px;
    justify-self: center;
}

.fil-knobs {
    display: grid;
    grid-template-columns: repeat(3, 1fr);
    column-gap: 10px;
}

.fil-knobs .lbl {
    margin-top: 6px;
}

/* disabled filter: everything fades into the panel */
.filter.off {
    --sel: 380px;
    --grid: 239px;
    background: #2e3235;
}

.filter.off > * {
    opacity: 0.45;
}

.filter.off .led {
    background: #8f9294;
}

.filter.off .fil-name {
    color: #4a4e51;
}

.filter.off .btn,
.filter.off .lbl,
.filter.off .preset-sel,
.filter.off .slider,
.filter.off .vscroll {
    background: #1f2326;
}

.filter.off .graph {
    background: #1b2023;
}

.filter.off .fill {
    background: #5a5e60;
}

.filter.off .thumb {
    background: #8f9294;
}

/* right column */
.right {
    display: flex;
    flex-direction: column;
    gap: 7px;
}

.sec {
    display: grid;
    grid-template-columns: 129px 1fr;
    overflow: hidden;
}

.sec-tabs {
    display: flex;
    flex-direction: column;
    gap: 0;
    min-height: 0;
}

.sec-tabs .tab {
    flex: 1 1 0;
}

.sec-body {
    padding: 10px;
    min-width: 0;
}

.env {
    height: 394px;
}

.env-graph {
    height: 253px;
}

.grid-text {
    font-size: 15px;
    fill: #3c4043;
}

.env-knobs {
    margin-top: 12px;
    display: grid;
    grid-template-columns: repeat(6, 1fr);
    column-gap: 11px;
}

.lfo {
    height: 524px;
}

.lfo-dots {
    width: 96px;
    margin: 31px auto 0;
    display: flex;
    flex-wrap: wrap;
}

.lfo-dots i {
    width: 24px;
    height: 24px;
    border-radius: 50%;
}

.lfo-dots .p {
    background: #aa88ff;
}

.lfo-dots .o {
    background: #ffab26;
}

.lfo-dots .c {
    background: #fff3dc;
}

.lfo-top {
    height: 38px;
    display: flex;
    align-items: center;
}

.lfo-shape {
    width: 157px;
    height: 38px;
    display: flex;
    align-items: center;
    gap: 17px;
    padding-left: 9px;
    background: #2c3033;
    border-radius: 17px;
}

.lfo-grid {
    margin-left: 11px;
    width: 125px;
    height: 38px;
    display: flex;
    align-items: center;
    justify-content: space-between;
    padding: 0 24px;
    background: #2c3033;
    border-radius: 17px;
    font-size: 18px;
}

.lfo-grid em {
    font-style: normal;
    color: #7f8284;
}

.lfo-smooth {
    margin-left: 21px;
}

.lfo-sel {
    margin: 0 0 0 20px;
    flex: 1;
    height: 38px;
    border-radius: 18px;
    font-size: 28px;
    font-weight: 300;
    color: #eeeeee;
}

.lfo-sel .chev {
    width: 11px;
    height: 18px;
}

.lfo-graph {
    margin-top: 10px;
    height: 312px;
    flex: none;
}

.lfo-pos {
    margin-top: 10px;
}

.lfo-bottom {
    margin-top: 9px;
    height: 111px;
    display: grid;
    grid-template-columns: 201px 201px 1fr 1fr 1fr;
    column-gap: 10px;
}

.lfo-bottom .knob {
    margin-top: 3px;
}

.lfo-bottom .lbl {
    margin-top: 3px;
}

.valbox {
    display: flex;
    flex-direction: column;
    background: #2c3033;
    border-radius: 16px;
    overflow: hidden;
}

.valbox-top {
    flex: 1;
    display: flex;
    align-items: center;
    justify-content: center;
    padding-bottom: 2px;
    font-size: 27px;
    font-weight: 300;
    color: #eeeeee;
}

.valbox-lbl {
    height: 33px;
    flex: none;
    line-height: 33px;
    text-align: center;
    font-size: 20px;
    color: #dddede;
    background: #3d4144;
}

.tempo {
    justify-content: flex-start;
}

.tempo span {
    width: 133px;
    text-align: center;
}

.tempo i {
    display: block;
    width: 1.5px;
    height: 41px;
    background: #5a5e60;
}

.tempo svg {
    margin-left: 25px;
    color: #7f8284;
}

.right-row {
    display: grid;
    grid-template-columns: 561px 517px;
    column-gap: 7px;
}

.rand-row {
    height: 263px;
    margin-top: 1px;
}

.rand-body {
    display: grid;
    grid-template-columns: 201px 201px;
    grid-template-rows: 37px 76px 111px;
    gap: 10px;
}

.btn.tall {
    border-radius: 18px;
}

.rand-graph {
    grid-column: 1 / 3;
    display: flex;
    align-items: center;
}

.rand-graph i {
    display: block;
    width: 100%;
    height: 3px;
    background: #6a6d6f;
}

.macros {
    display: grid;
    grid-template-columns: repeat(4, 1fr);
    grid-template-rows: 1fr 1fr;
    gap: 1px 2px;
}

.macros .tab {
    border-radius: 6px;
}

.bottom-row {
    height: 131px;
}

.voices-panel {
    padding: 10px;
    display: grid;
    grid-template-columns: 118px 119px 1fr 1fr;
    column-gap: 10.5px;
}

.voices-panel .lbl,
.glide-panel .lbl {
    margin-top: 6px;
}

.glide-panel {
    padding: 10px;
    display: grid;
    grid-template-columns: 146px 146px 184px;
    column-gap: 10.5px;
}

.glide-btns {
    display: grid;
    grid-template-rows: 34px 34px 34px;
    row-gap: 4.5px;
}

.keyboard {
    grid-column: 2 / 4;
    height: 66px;
    overflow: hidden;
    border-radius: 3px;
}

.keyboard svg {
    display: block;
}
```

FILE: script.js
```js
const COLORS = { purple: '#aa88ff', teal: '#00f0d2', orange: '#ffab26', pink: '#ff99dd', blue: '#8899ff' };

function polar(cx, cy, r, deg) {
    const rad = deg * Math.PI / 180;
    return [cx + r * Math.sin(rad), cy - r * Math.cos(rad)];
}

function arc(cx, cy, r, from, to) {
    const a = polar(cx, cy, r, from);
    const b = polar(cx, cy, r, to);
    const large = Math.abs(to - from) > 180 ? 1 : 0;
    return 'M' + a[0] + ' ' + a[1] + ' A' + r + ' ' + r + ' 0 ' + large + ' 1 ' + b[0] + ' ' + b[1];
}

// knobs: angle in degrees from the top, -145 is the minimum
document.querySelectorAll('.knob').forEach(function (el) {
    const s = el.offsetWidth;
    const c = s / 2;
    const r = s * 0.4;
    const v = Number(el.dataset.v);
    const tip = polar(c, c, r, v);
    const inner = polar(c, c, s * 0.16, v);
    let html = '<svg width="' + s + '" height="' + s + '">';
    html += '<circle cx="' + c + '" cy="' + c + '" r="' + c + '" fill="#212528"/>';
    html += '<circle cx="' + c + '" cy="' + c + '" r="' + c * 0.98 + '" fill="#282c2f" opacity="0.6"/>';
    html += '<path d="' + arc(c, c, r, -143, 143) + '" fill="none" stroke="#4a4e51" stroke-width="3.6" stroke-linecap="round"/>';
    if (el.dataset.c) {
        html += '<path d="' + arc(c, c, r, -143, Math.min(v, 143)) + '" fill="none" stroke="' + COLORS[el.dataset.c] + '" stroke-width="4.5" stroke-linecap="round"/>';
    }
    html += '<path d="M' + tip[0] + ' ' + tip[1] + ' L' + inner[0] + ' ' + inner[1] + '" stroke="#ffffff" stroke-width="4" stroke-linecap="round"/>';
    el.innerHTML = html + '</svg>';
});

// little modulation meters under the mod sources
document.querySelectorAll('.meter').forEach(function (el) {
    el.innerHTML = '<svg width="31" height="31"><circle cx="15.5" cy="15.5" r="15.5" fill="#212528"/>' +
        '<path d="' + arc(15.5, 15.5, 11, Number(el.dataset.a), Number(el.dataset.b)) + '" fill="none" stroke="' + COLORS[el.dataset.c] + '" stroke-width="6"/></svg>';
});

function smooth(pts) {
    let d = 'M' + pts[0][0] + ' ' + pts[0][1];
    for (let i = 0; i < pts.length - 1; i++) {
        const p0 = pts[i - 1] || pts[i];
        const p1 = pts[i];
        const p2 = pts[i + 1];
        const p3 = pts[i + 2] || p2;
        d += ' C' + (p1[0] + (p2[0] - p0[0]) / 6) + ' ' + (p1[1] + (p2[1] - p0[1]) / 6) +
            ' ' + (p2[0] - (p3[0] - p1[0]) / 6) + ' ' + (p2[1] - (p3[1] - p1[1]) / 6) +
            ' ' + p2[0] + ' ' + p2[1];
    }
    return d;
}

// white noise: a thin jitter along the top and bottom of the block
const noise = [];
for (let x = 0; x <= 486; x += 4) {
    noise.push([x, 43 + ((x * 13) % 7) * 0.25]);
}
const noiseBottom = noise.map(function (p) { return [p[0], 151 - p[1]]; });

const WAVES = {
    donk: [[0, 123], [16, 137], [32, 123], [44, 90], [62, 67], [75, 77], [87, 103], [98, 118], [114, 107], [142, 67], [161, 93], [179, 120], [191, 117], [219, 89], [240, 110], [262, 144], [280, 120], [298, 112], [314, 120], [341, 166], [363, 137], [381, 114], [400, 127], [424, 163], [445, 130], [460, 92], [473, 103], [486, 123]],
    basic: [[0, 174], [54, 144], [105, 128], [161, 114], [217, 104], [279, 100], [345, 100], [421, 102], [476, 104]],
    basic3: [[0, 129], [32, 149], [77, 169], [103, 184], [147, 172], [198, 142], [237, 115], [262, 94], [294, 69], [339, 55], [390, 64], [437, 79], [466, 112], [486, 133]]
};

document.querySelectorAll('[data-wave]').forEach(function (svg) {
    const name = svg.dataset.wave;
    let html = '';
    if (name === 'noise') {
        const top = 'M' + noise.map(function (p) { return p.join(' '); }).join(' L');
        const bottom = 'M' + noiseBottom.map(function (p) { return p.join(' '); }).join(' L');
        html += '<path d="' + top + ' L486 ' + noiseBottom[noiseBottom.length - 1][1] + ' L' + noiseBottom.map(function (p) { return p.join(' '); }).reverse().join(' L') + ' Z" fill="#7361b3"/>';
        html += '<path d="' + top + '" fill="none" stroke="#aa88ff" stroke-width="3"/>';
        html += '<path d="' + bottom + '" fill="none" stroke="#aa88ff" stroke-width="3"/>';
        svg.innerHTML = html;
        return;
    }
    const line = smooth(WAVES[name]);
    let tail = '';
    if (name === 'basic') {
        tail = ' L479 99 L481 116 L481 174 L486 174';
    }
    html += '<path d="' + line + tail + ' L486 116 L0 116 Z" fill="#7361b3"/>';
    html += '<path d="' + line + tail + '" fill="none" stroke="#aa88ff" stroke-width="3"/>';
    if (name === 'donk') {
        html += '<circle cx="459" cy="116" r="15.5" fill="none" stroke="#00f0d2" stroke-width="10"/>';
    }
    svg.innerHTML = html;
});

const CURVES = {
    f1: [[0, 79], [47, 75], [103, 70], [123, 74], [139, 89], [159, 112], [180, 142], [198, 174]],
    f2: [[0, 90], [108, 89], [175, 84], [211, 74], [240, 66], [255, 74], [286, 109], [358, 174]]
};

document.querySelectorAll('[data-curve]').forEach(function (svg) {
    const line = smooth(CURVES[svg.dataset.curve]);
    if (svg.dataset.curve === 'f1') {
        svg.innerHTML = '<defs><linearGradient id="orange-fill" x1="0" y1="0" x2="0" y2="1"><stop offset="0" stop-color="#a46a40"/><stop offset="1" stop-color="#926240"/></linearGradient></defs>' +
            '<path d="' + line + ' L0 174 Z" fill="url(#orange-fill)"/><path d="' + line + '" fill="none" stroke="#ffab26" stroke-width="3"/>';
    } else {
        svg.innerHTML = '<path d="' + line + '" fill="none" stroke="#5a5e60" stroke-width="2"/>';
    }
});

// volume scale under the meter
const ticks = document.getElementById('ticks');
[10, 19, 32, 48, 68, 91, 117, 146, 178, 214, 295].forEach(function (x) {
    const t = document.createElement('i');
    t.style.left = x + 'px';
    ticks.appendChild(t);
});
const marker = document.createElement('b');
marker.style.left = '245px';
ticks.appendChild(marker);

// 128 keys, semitones evenly spaced as the reference draws them
const W = 2401;
const semi = W / 128;
const whiteW = semi * 12 / 7;
let keys = '<svg width="' + W + '" height="66"><rect width="' + W + '" height="66" fill="#4a4e51"/>';
for (let x = whiteW; x < W; x += whiteW) {
    keys += '<rect x="' + x + '" y="0" width="1" height="66" fill="#42464a"/>';
}
for (let i = 0; i < 128; i++) {
    if ([1, 3, 6, 8, 10].indexOf(i % 12) >= 0) {
        keys += '<rect x="' + ((i + 0.5) * semi - 12.5) + '" y="-8" width="25" height="54" rx="6" fill="#1f2326"/>';
    }
}
document.getElementById('keyboard').innerHTML = keys + '</svg>';
```
